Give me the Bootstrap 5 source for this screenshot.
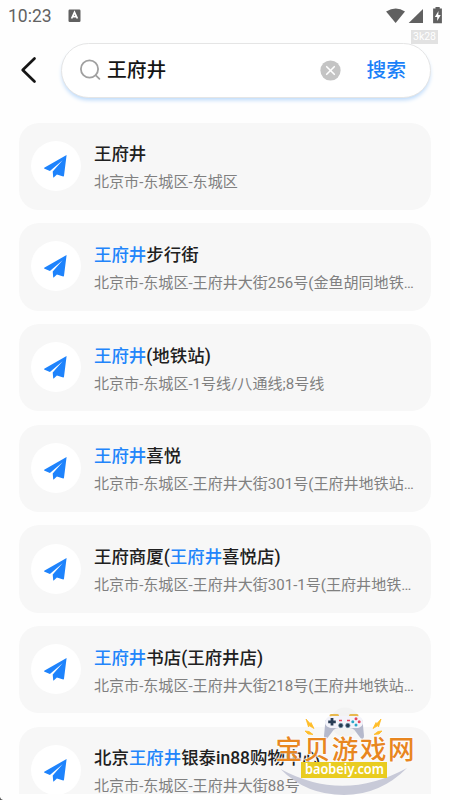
<!DOCTYPE html>
<html lang="zh-CN">
<head>
<meta charset="utf-8">
<meta name="viewport" content="width=device-width, initial-scale=1">
<title>王府井</title>
<link href="https://cdn.jsdelivr.net/npm/bootstrap@5.3.0/dist/css/bootstrap.min.css" rel="stylesheet">
<style>
  body { font-family: Roboto, "Noto Sans CJK SC", sans-serif; color: #202020; background: #fefefe; }
  .screen { width: 450px; height: 800px; }
  .status { height: 33px; padding: 0 7px 2px 8px; color: #626262; font-size: 17.5px; line-height: 30px; }
  .top-row { height: 64px; padding: 10px 19px 0 20px; }
  .back { width: 41px; height: 54px; }
  .search { height: 55px; border: 1.4px solid #e5e5e5; border-radius: 28px; background: #fff; box-shadow: 0 3px 4px -1px #b9d8fa; padding: 0 24px 1px 17px; }
  .query { font-size: 19.8px; font-weight: 500; line-height: 30px; color: #151515; margin-left: 6px; margin-top: 2px; }
  .clear { margin-right: 25px; }
  .go { font-size: 19.8px; font-weight: 500; line-height: 30px; color: #1a80f8; margin-top: 2px; }
  .results { height: 671.5px; margin-top: 25.5px; padding: 0 19px; gap: 13.2px; }
  .place { height: 87.5px; border-radius: 20px; background: #f7f7f7; padding-left: 12px; }
  .round { width: 50px; height: 50px; background: #fff; margin-right: 13px; margin-bottom: 1px; }
  .name { font-size: 17.45px; font-weight: 500; line-height: 28px; margin-top: 2px; }
  .name b { font-weight: 500; color: #2285fb; }
  .addr { font-size: 15.05px; line-height: 24px; color: #808080; margin-top: 2px; }
  .tag { left: 411px; top: 30px; width: 27px; height: 14px; background: #e2e2e2; color: #fff; font-size: 10.5px; line-height: 14px; }
  .logo-art { left: 270px; top: 700px; }
  .corner { left: 0; bottom: 0; }
</style>
<script src="https://cdn.jsdelivr.net/npm/bootstrap@5.3.0/dist/js/bootstrap.bundle.min.js"></script>
</head>
<body>
<svg class="d-none">
  <symbol id="plane" viewBox="0 0 24 24">
    <path fill="#1e83fc" d="M22.600 1 .2 13.700q-.4.800.4 1.100l5.300 2.200L18.600 6.200 8.700 17.600l.5 5.700q.3.500.8 0l2.900-2.900 6.300 2q.7.100.8-.6z"/>
  </symbol>
</svg>
<main class="screen position-relative overflow-hidden">
  <header class="status d-flex align-items-center">
    <span>10:23</span>
    <svg class="ms-3" width="13" height="14" viewBox="0 0 13 14"><rect x=".5" y=".5" width="12" height="12.5" rx="1.2" fill="#606060"/><path d="M3.600 9.500 6.500 3.300 9.400 9.500M4.700 7.600h3.600" fill="none" stroke="#fff" stroke-width="1.700"/></svg>
    <svg class="ms-auto" width="57" height="18" viewBox="0 0 57 18" fill="#606060">
      <path d="M.1 4.600Q10 -1.800 19 4.600L9.600 16z"/>
      <path d="M37 1.900V16H22.700z"/>
      <path d="M49.500 0h4.200v1.500h2.200v14.700h-8.800V1.500h2.400z"/><path d="M52.500 4 48.800 10h2.400v4l3.500-6h-2.400z" fill="#fff"/>
    </svg>
  </header>
  <div class="top-row d-flex align-items-start">
    <div class="back d-flex align-items-center"><svg width="18" height="28" viewBox="0 0 18 28"><path d="M14.500 2.500 2.700 14l11.800 11.500" fill="none" stroke="#151515" stroke-width="2.700" stroke-linecap="round" stroke-linejoin="round"/></svg></div>
    <div class="search flex-fill d-flex align-items-center">
      <svg width="22" height="22" viewBox="0 0 22 22" fill="none" stroke="#a0a0a0" stroke-width="1.800" stroke-linecap="round"><circle cx="10.500" cy="10" r="8.600"/><path d="m16.800 16.300 3.600 3.600"/></svg>
      <span class="query me-auto">王府井</span>
      <svg class="clear" width="21" height="21" viewBox="0 0 21 21"><circle cx="10.500" cy="10.500" r="10.100" fill="#c4c4c4"/><path d="m6.700 6.700 7.600 7.600m0-7.600-7.600 7.600" stroke="#fff" stroke-width="1.600" stroke-linecap="round"/></svg>
      <span class="go">搜索</span>
    </div>
  </div>
  <section class="results d-flex flex-column overflow-hidden">
    <article class="place d-flex align-items-center flex-shrink-0"><div class="round rounded-circle d-flex align-items-center justify-content-center"><svg width="24" height="24"><use href="#plane"/></svg></div><div class="text-nowrap"><div class="name">王府井</div><div class="addr">北京市-东城区-东城区</div></div></article>
    <article class="place d-flex align-items-center flex-shrink-0"><div class="round rounded-circle d-flex align-items-center justify-content-center"><svg width="24" height="24"><use href="#plane"/></svg></div><div class="text-nowrap"><div class="name"><b>王府井</b>步行街</div><div class="addr">北京市-东城区-王府井大街256号(金鱼胡同地铁…</div></div></article>
    <article class="place d-flex align-items-center flex-shrink-0"><div class="round rounded-circle d-flex align-items-center justify-content-center"><svg width="24" height="24"><use href="#plane"/></svg></div><div class="text-nowrap"><div class="name"><b>王府井</b>(地铁站)</div><div class="addr">北京市-东城区-1号线/八通线;8号线</div></div></article>
    <article class="place d-flex align-items-center flex-shrink-0"><div class="round rounded-circle d-flex align-items-center justify-content-center"><svg width="24" height="24"><use href="#plane"/></svg></div><div class="text-nowrap"><div class="name"><b>王府井</b>喜悦</div><div class="addr">北京市-东城区-王府井大街301号(王府井地铁站…</div></div></article>
    <article class="place d-flex align-items-center flex-shrink-0"><div class="round rounded-circle d-flex align-items-center justify-content-center"><svg width="24" height="24"><use href="#plane"/></svg></div><div class="text-nowrap"><div class="name">王府商厦(<b>王府井</b>喜悦店)</div><div class="addr">北京市-东城区-王府井大街301-1号(王府井地铁…</div></div></article>
    <article class="place d-flex align-items-center flex-shrink-0"><div class="round rounded-circle d-flex align-items-center justify-content-center"><svg width="24" height="24"><use href="#plane"/></svg></div><div class="text-nowrap"><div class="name"><b>王府井</b>书店(王府井店)</div><div class="addr">北京市-东城区-王府井大街218号(王府井地铁站…</div></div></article>
    <article class="place d-flex align-items-center flex-shrink-0"><div class="round rounded-circle d-flex align-items-center justify-content-center"><svg width="24" height="24"><use href="#plane"/></svg></div><div class="text-nowrap"><div class="name">北京<b>王府井</b>银泰in88购物中心</div><div class="addr">北京市-东城区-王府井大街88号</div></div></article>
  </section>
  <span class="tag position-absolute text-center">3k28</span>
  <svg class="logo-art position-absolute" width="150" height="100" viewBox="0 0 150 100">
    <circle cx="75" cy="22" r="14.500" fill="#f2f2f2"/>
    <path d="M10.500 69Q73 103 137 68Q110 95 74 95Q36 95 10.500 69z" fill="#c8cad8"/>
    <path d="M61 15.500h6.500M80.500 15.500H87" stroke="#e8b94e" stroke-width="3" stroke-linecap="round"/>
    <path d="M55.500 20 54 36q.3 4.500 3.500 2l6-8q2-2 5-2h11q3 0 5 2l6 8q3.200 2.500 3.500-2L92.500 20z" fill="#b5b9cc"/>
    <path d="M62 16h24.500c4.500 0 6.500 3 6.500 6.500s-3 5.500-7 5.500H62c-4 0-7-2.500-7-5.500S57.500 16 62 16z" fill="#f3f3fa"/>
    <path d="M62 18v7.500M58.200 21.800h7.600" stroke="#283c55" stroke-width="2.800"/>
    <g fill="#e54861"><circle cx="86" cy="18.800" r="1.500"/><circle cx="89.200" cy="21.800" r="1.500"/></g><g fill="#2aa6c7"><circle cx="82.800" cy="21.800" r="1.500"/><circle cx="86" cy="24.900" r="1.500"/></g>
    <path d="M69 20.500h3m5 0h3" stroke="#e54861" stroke-width="1.300"/>
    <g fill="#263b52" stroke="#6f91a5" stroke-width=".7"><circle cx="70.800" cy="25.500" r="2.200"/><circle cx="77.800" cy="25.500" r="2.200"/></g>
    <path d="m36 19 4.500 5 .5-1.500 3 6-5-3-.5 1.500zM35 31l4 .5 4 3-5-.5zM111 19l-4.500 5-.5-1.500-3 6 5-3 .5 1.500zM112 31l-4 .5-4 3 5-.5z" fill="#ffbd28" stroke="#ffbd28" stroke-width=".8"/>
    <text x="5.500" y="59" textLength="139" lengthAdjust="spacing" font-family="'Noto Sans CJK SC',sans-serif" font-size="26.500" font-weight="500" fill="#e8861f" stroke="#fff" stroke-opacity=".7" stroke-width="2" paint-order="stroke">宝贝游戏网</text>
    <rect x="31" y="62" width="86" height="16" fill="#e9cc20"/>
    <text x="35" y="74" textLength="79" lengthAdjust="spacingAndGlyphs" font-family="'Noto Sans',sans-serif" font-size="13.500" font-weight="600" fill="#fff">baobeiy.com</text>
  </svg>
  <svg class="corner position-absolute" width="3" height="3" viewBox="0 0 3 3"><path d="M0 0q.5 2.500 3 3H0z" fill="#555"/></svg>
</main>
</body>
</html>
